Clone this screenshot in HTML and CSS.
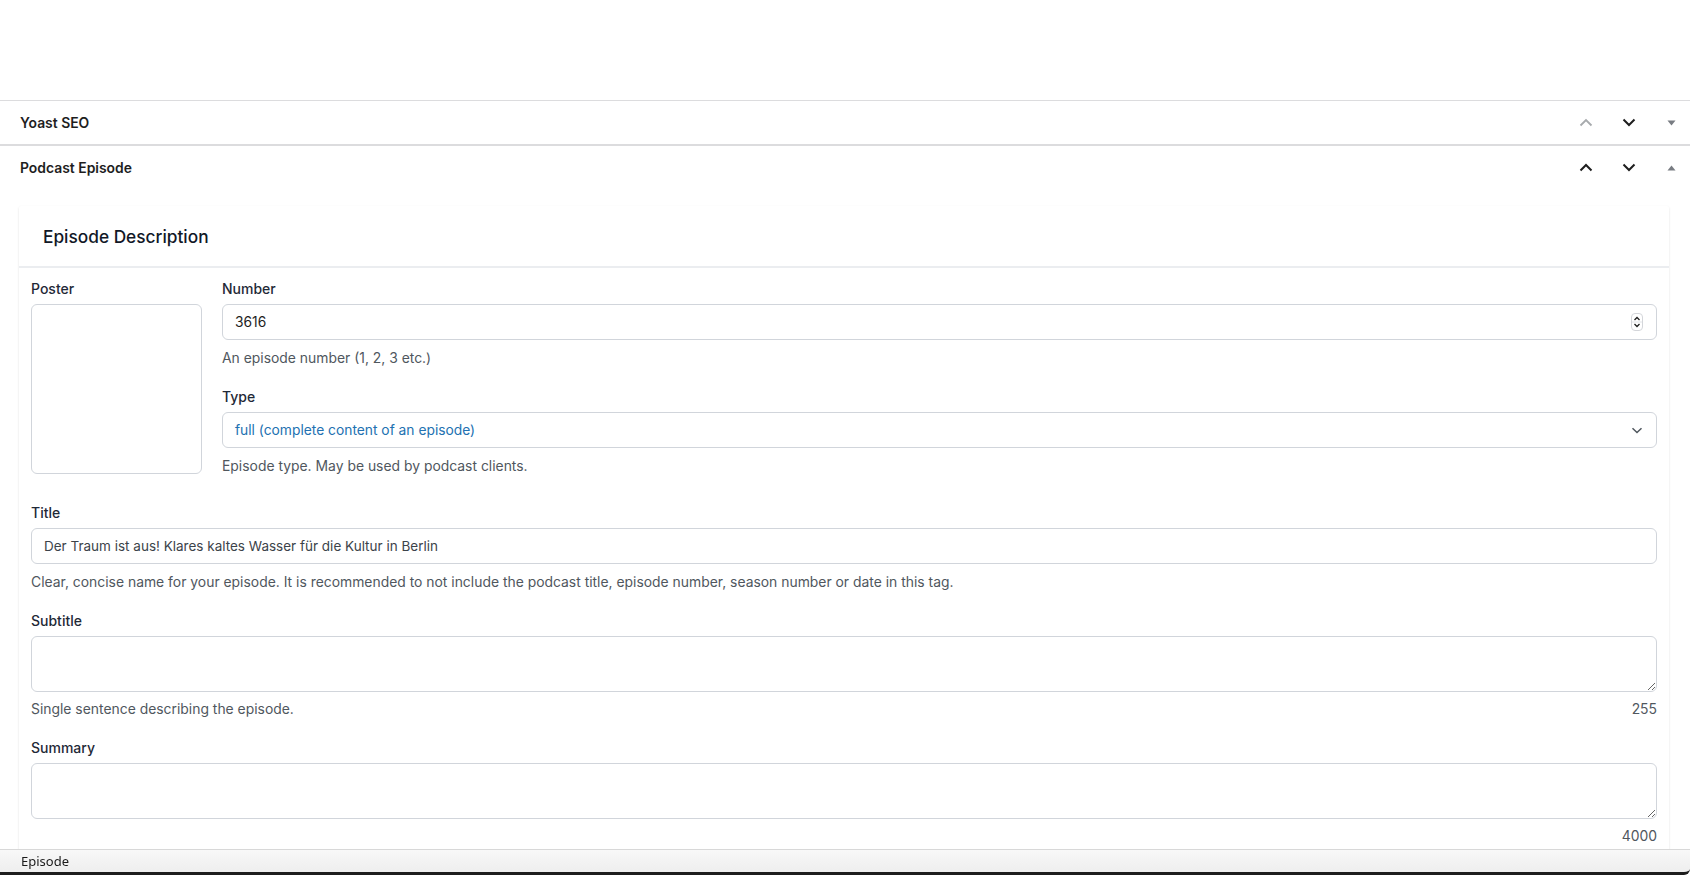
FILE: index.html
```html
<!DOCTYPE html>
<html lang="en">
<head>
<meta charset="utf-8">
<title>Podcast Episode</title>
<link rel="stylesheet" href="styles.css">
</head>
<body>
<div class="top-space"></div>

<div class="postbox postbox-first">
  <div class="postbox-header">
    <h2 class="hndle">Yoast SEO</h2>
    <div class="handle-actions">
      <button class="handle-btn disabled" aria-label="Move up">
        <svg width="14" height="9" viewBox="0 0 14 9"><path d="M1.5 7.5 L7 2 L12.5 7.5" fill="none" stroke="currentColor" stroke-width="1.8"/></svg>
      </button>
      <button class="handle-btn" aria-label="Move down">
        <svg width="14" height="9" viewBox="0 0 14 9"><path d="M1.5 1.5 L7 7 L12.5 1.5" fill="none" stroke="currentColor" stroke-width="2"/></svg>
      </button>
      <button class="handle-btn toggle" aria-label="Toggle">
        <svg width="9" height="6" viewBox="0 0 9 6"><path d="M0.5 0.5 H8.5 L4.5 5.5 Z" fill="currentColor"/></svg>
      </button>
    </div>
  </div>
</div>

<div class="postbox">
  <div class="postbox-header">
    <h2 class="hndle">Podcast Episode</h2>
    <div class="handle-actions">
      <button class="handle-btn" aria-label="Move up">
        <svg width="14" height="9" viewBox="0 0 14 9"><path d="M1.5 7.5 L7 2 L12.5 7.5" fill="none" stroke="currentColor" stroke-width="2"/></svg>
      </button>
      <button class="handle-btn" aria-label="Move down">
        <svg width="14" height="9" viewBox="0 0 14 9"><path d="M1.5 1.5 L7 7 L12.5 1.5" fill="none" stroke="currentColor" stroke-width="2"/></svg>
      </button>
      <button class="handle-btn toggle" aria-label="Toggle">
        <svg width="9" height="6" viewBox="0 0 9 6"><path d="M0.5 5.5 H8.5 L4.5 0.5 Z" fill="currentColor"/></svg>
      </button>
    </div>
  </div>

  <div class="inside">
    <div class="card">
      <div class="card-header">Episode Description</div>
      <div class="card-body">
        <div class="row-top">
          <div class="poster-col">
            <div class="label">Poster</div>
            <div class="poster-box"></div>
          </div>
          <div class="fields-col">
            <div class="field">
              <div class="label">Number</div>
              <div class="control control-number">
                <span class="value">3616</span>
                <svg class="spinner" width="12" height="18" viewBox="0 0 12 18">
                  <rect x="0.5" y="0.5" width="11" height="17" rx="3.5" fill="#fff" stroke="#d4d6da"/>
                  <path d="M3.5 7 L6 4.5 L8.5 7" fill="none" stroke="#1e1e1e" stroke-width="1.3"/>
                  <path d="M3.5 11 L6 13.5 L8.5 11" fill="none" stroke="#1e1e1e" stroke-width="1.3"/>
                  <line x1="1" y1="9" x2="11" y2="9" stroke="#e2e4e8"/>
                </svg>
              </div>
              <div class="help">An episode number (1, 2, 3 etc.)</div>
            </div>
            <div class="field">
              <div class="label">Type</div>
              <div class="control control-select">
                <span class="value select-value">full (complete content of an episode)</span>
                <svg class="select-arrow" width="12" height="7" viewBox="0 0 12 7"><path d="M1.5 1.2 L6 5.5 L10.5 1.2" fill="none" stroke="#50575e" stroke-width="1.5"/></svg>
              </div>
              <div class="help">Episode type. May be used by podcast clients.</div>
            </div>
          </div>
        </div>

        <div class="field">
          <div class="label">Title</div>
          <div class="control control-text"><span class="value title-value">Der Traum ist aus! Klares kaltes Wasser für die Kultur in Berlin</span></div>
          <div class="help">Clear, concise name for your episode. It is recommended to not include the podcast title, episode number, season number or date in this tag.</div>
        </div>

        <div class="field">
          <div class="label">Subtitle</div>
          <textarea class="textarea"></textarea>
          <div class="help help-row"><span>Single sentence describing the episode.</span><span>255</span></div>
        </div>

        <div class="field">
          <div class="label">Summary</div>
          <textarea class="textarea"></textarea>
          <div class="help help-row"><span></span><span>4000</span></div>
        </div>
      </div>
    </div>
  </div>
</div>

<div class="status-bar">Episode</div>
</body>
</html>
```

FILE: styles.css
```css
* { box-sizing: border-box; }

html, body {
  margin: 0;
  padding: 0;
  background: #fff;
}

body {
  font-family: Inter, "Noto Sans", "Liberation Sans", sans-serif;
  color: #1e1e1e;
  font-size: 14px;
  overflow: hidden;
  height: 875px;
}

.top-space {
  height: 100px;
}

.postbox {
  border-top: 1px solid #dcdcde;
}

.postbox-first {
  border-bottom: 1px solid #dcdcde;
}

.postbox-header {
  height: 43px;
  display: flex;
  align-items: center;
  justify-content: space-between;
  padding-left: 20px;
}

.hndle {
  margin: 0;
  font-size: 13.9px;
  font-weight: 600;
  color: #1e1e1e;
}

.handle-actions {
  display: flex;
  align-items: center;
  gap: 3px;
  height: 100%;
}

.handle-btn {
  width: 40px;
  height: 100%;
  border: 0;
  background: transparent;
  padding: 0;
  display: flex;
  align-items: center;
  justify-content: center;
  color: #1e1e1e;
}

.handle-btn.disabled {
  color: #a7aaad;
}

.handle-btn.toggle {
  width: 38px;
  color: #787c82;
}

.inside {
  padding: 17px 21px 0 19px;
}

.card {
  background: #fff;
  box-shadow: 0 1px 3px rgba(0, 0, 0, 0.08), 0 1px 2px rgba(0, 0, 0, 0.05);
  border-radius: 2px;
}

.card-header {
  height: 62px;
  display: flex;
  align-items: center;
  padding-left: 24px;
  font-size: 17.3px;
  font-weight: 500;
  color: #111827;
  border-bottom: 2px solid #ebedf0;
}

.card-body {
  padding: 11px 12px 20px 12px;
}

.row-top {
  display: grid;
  grid-template-columns: 171px 1fr;
  column-gap: 20px;
  margin-bottom: 8px;
}

.label {
  font-size: 14px;
  font-weight: 500;
  line-height: 20px;
  color: #1f2937;
  margin-bottom: 5px;
}

.poster-box {
  height: 170px;
  border: 1px solid #d1d5db;
  border-radius: 6px;
}

.field {
  margin-bottom: 19px;
}

.control {
  height: 36px;
  border: 1px solid #d1d5db;
  border-radius: 6px;
  display: flex;
  align-items: center;
  justify-content: space-between;
  padding: 0 12px;
  font-size: 13.8px;
  color: #1e1e1e;
}

.control-number {
  padding-right: 13px;
}

.select-value {
  color: #2271b1;
}

.title-value {
  color: #3c434a;
  font-size: 13.5px;
}

.select-arrow {
  margin-right: 1px;
}

.help {
  margin-top: 8px;
  font-size: 13.9px;
  line-height: 20px;
  color: #50575e;
}

.help-row {
  display: flex;
  justify-content: space-between;
  margin-top: 7px;
}

.textarea {
  display: block;
  width: 100%;
  height: 56px;
  border: 1px solid #d1d5db;
  border-radius: 6px;
  font-family: inherit;
  font-size: 13.5px;
  padding: 8px 12px;
  margin: 0;
  resize: vertical;
  background: #fff;
}

.status-bar {
  position: fixed;
  left: 0;
  right: 0;
  bottom: 0;
  height: 26px;
  background: linear-gradient(#f8f8f8, #eeeeee);
  border-top: 1px solid #d8d8d8;
  border-bottom: 3px solid #1d1d1d;
  border-bottom-right-radius: 6px;
  font-family: "Noto Sans", Inter, sans-serif;
  font-size: 13px;
  line-height: 22px;
  padding-left: 21px;
  color: #1a1a1a;
}
```
